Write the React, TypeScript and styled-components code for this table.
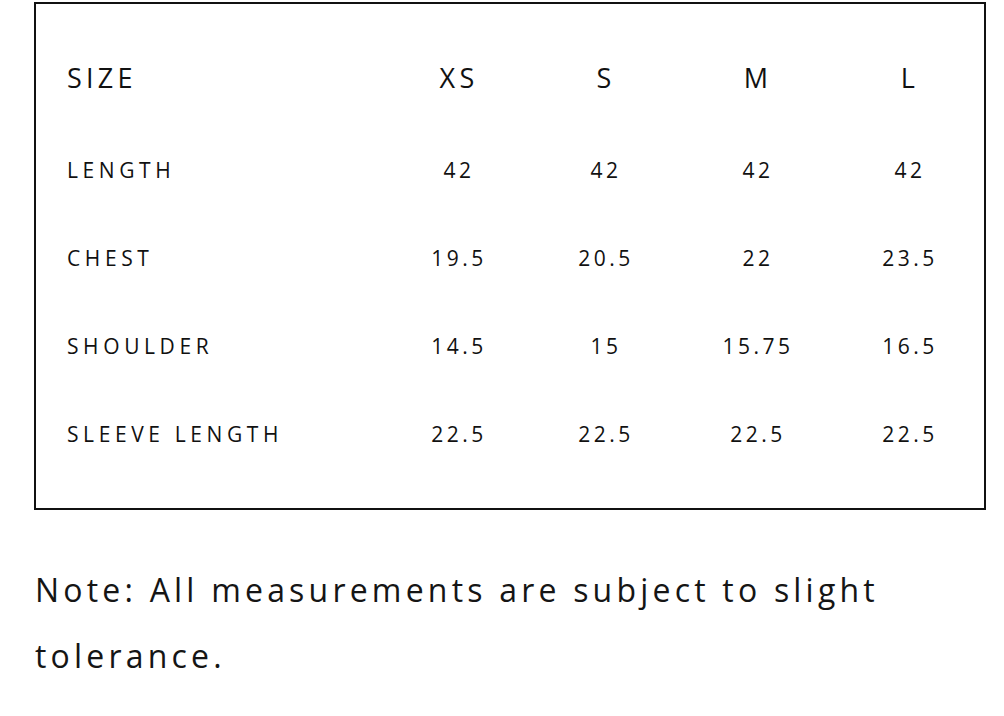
import React from "react";
import styled, { createGlobalStyle } from "styled-components";

const GlobalStyle = createGlobalStyle`
  html, body {
    margin: 0;
    padding: 0;
    background: #ffffff;
  }
  body {
    font-family: "Open Sans", "Liberation Sans", sans-serif;
    color: #111111;
  }
`;

const Page = styled.div`
  padding: 2px 18px 0 34px;
`;

const Chart = styled.div`
  border: 2px solid #111111;
  padding: 24px 0 30px;
`;

const Row = styled.div<{ $head?: boolean }>`
  display: grid;
  grid-template-columns: 1fr 142px repeat(3, 152px);
  align-items: center;
  height: ${(p) => (p.$head ? "98px" : "88px")};
  font-size: ${(p) => (p.$head ? "27px" : "21px")};
  font-weight: 400;
  letter-spacing: ${(p) => (p.$head ? "4.2px" : "4.6px")};
`;

const Label = styled.div`
  padding-left: 31px;
`;

const Cell = styled.div<{ $num?: boolean }>`
  text-align: center;
  padding-left: 4px;
  letter-spacing: ${(p) => (p.$num ? "3.5px" : "inherit")};
`;

const Note = styled.p`
  margin: 47px 0 0 1px;
  font-size: 32px;
  font-weight: 400;
  line-height: 66px;
  letter-spacing: 4.2px;
  color: #151515;
  max-width: 900px;
`;

const sizes = ["XS", "S", "M", "L"];

const rows: [string, string[]][] = [
  ["LENGTH", ["42", "42", "42", "42"]],
  ["CHEST", ["19.5", "20.5", "22", "23.5"]],
  ["SHOULDER", ["14.5", "15", "15.75", "16.5"]],
  ["SLEEVE LENGTH", ["22.5", "22.5", "22.5", "22.5"]],
];

export default function App() {
  return (
    <>
      <GlobalStyle />
      <Page>
        <Chart>
          <Row $head>
            <Label>SIZE</Label>
            {sizes.map((s) => (
              <Cell key={s}>{s}</Cell>
            ))}
          </Row>
          {rows.map(([name, vals]) => (
            <Row key={name}>
              <Label>{name}</Label>
              {vals.map((v, i) => (
                <Cell key={i} $num>
                  {v}
                </Cell>
              ))}
            </Row>
          ))}
        </Chart>
        <Note>Note: All measurements are subject to slight tolerance.</Note>
      </Page>
    </>
  );
}
